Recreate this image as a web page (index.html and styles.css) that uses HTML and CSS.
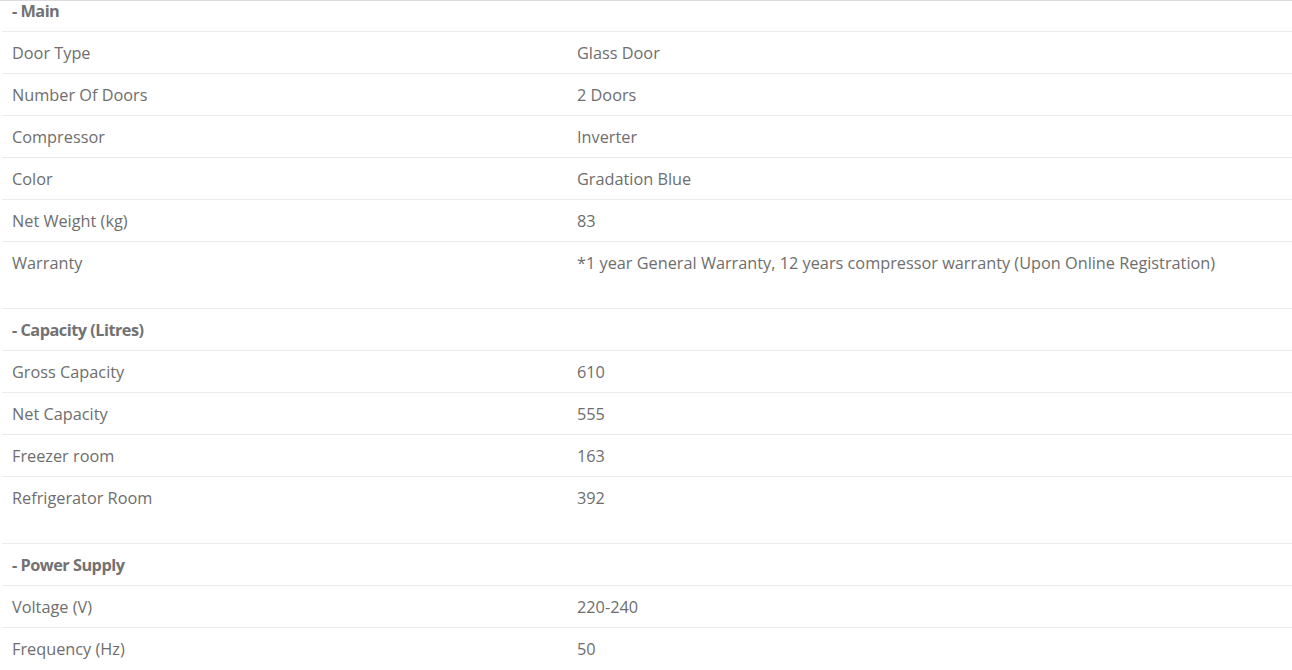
FILE: index.html
```html
<!DOCTYPE html>
<html>
<head>
<meta charset="utf-8">
<link rel="stylesheet" href="styles.css">
</head>
<body>
<div class="specs">
  <div class="group">
    <div class="head head--first">- Main</div>
    <div class="row"><div class="label">Door Type</div><div class="value">Glass Door</div></div>
    <div class="row"><div class="label">Number Of Doors</div><div class="value">2 Doors</div></div>
    <div class="row"><div class="label">Compressor</div><div class="value">Inverter</div></div>
    <div class="row"><div class="label">Color</div><div class="value">Gradation Blue</div></div>
    <div class="row"><div class="label">Net Weight (kg)</div><div class="value">83</div></div>
    <div class="row row--last"><div class="label">Warranty</div><div class="value">*1 year General Warranty, 12 years compressor warranty (Upon Online Registration)</div></div>
  </div>
  <div class="group">
    <div class="head">- Capacity (Litres)</div>
    <div class="row"><div class="label">Gross Capacity</div><div class="value">610</div></div>
    <div class="row"><div class="label">Net Capacity</div><div class="value">555</div></div>
    <div class="row"><div class="label">Freezer room</div><div class="value">163</div></div>
    <div class="row row--last"><div class="label">Refrigerator Room</div><div class="value">392</div></div>
  </div>
  <div class="group">
    <div class="head">- Power Supply</div>
    <div class="row"><div class="label">Voltage (V)</div><div class="value">220-240</div></div>
    <div class="row row--last"><div class="label">Frequency (Hz)</div><div class="value">50</div></div>
  </div>
</div>
</body>
</html>
```
FILE: styles.css
```css
html, body {
  margin: 0;
  padding: 0;
  background: #fff;
}
body {
  font-family: "Open Sans", "Noto Sans", sans-serif;
  font-size: 16.3px;
  color: #6e6e6e;
  overflow: hidden;
}
.specs {
  border-top: 1px solid #dcdce0;
  padding-left: 2px;
}
.head {
  padding: 11px 10px 9px;
  line-height: 21px;
  font-weight: 700;
  letter-spacing: -0.5px;
  color: #727272;
  border-bottom: 1px solid #ebebeb;
}
.head--first {
  padding-top: 0;
  padding-bottom: 9px;
}
.row {
  display: grid;
  grid-template-columns: 565px 1fr;
  line-height: 21px;
  border-bottom: 1px solid #ebebeb;
}
.label, .value {
  padding: 11px 10px 9px;
}
.row--last .label, .row--last .value {
  padding-bottom: 34px;
}
```
